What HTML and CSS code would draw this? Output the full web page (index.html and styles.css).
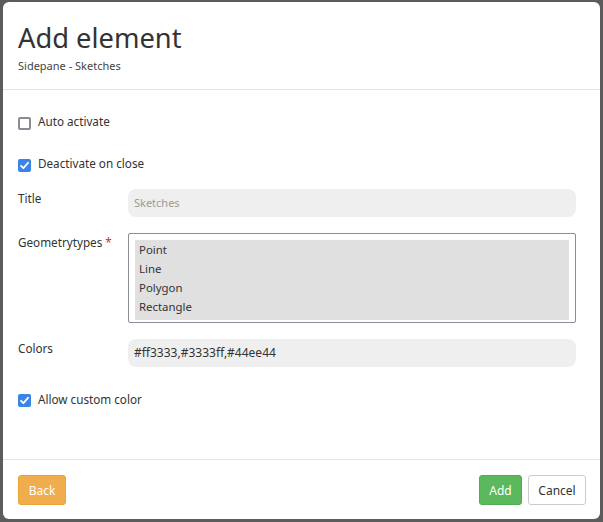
FILE: index.html
```html
<!DOCTYPE html>
<html>
<head>
<meta charset="utf-8">
<link rel="stylesheet" href="styles.css">
</head>
<body>
<div class="modal">
  <div class="modal-header">
    <h1 class="title">Add element</h1>
    <div class="subtitle">Sidepane - Sketches</div>
  </div>
  <div class="modal-body">
    <label class="check-row first">
      <span class="box"></span>
      <span class="check-text">Auto activate</span>
    </label>
    <label class="check-row second">
      <span class="box checked"><svg viewBox="0 0 13 13" width="13" height="13"><path d="M3 6.8 L5.4 9.2 L10 3.8" fill="none" stroke="#fff" stroke-width="1.8" stroke-linecap="round" stroke-linejoin="round"/></svg></span>
      <span class="check-text">Deactivate on close</span>
    </label>
    <div class="field title-field">
      <div class="label">Title</div>
      <div class="input placeholder">Sketches</div>
    </div>
    <div class="field geo-field">
      <div class="label">Geometrytypes <span class="req">*</span></div>
      <div class="select">
        <div class="options">
          <div class="opt">Point</div>
          <div class="opt">Line</div>
          <div class="opt">Polygon</div>
          <div class="opt">Rectangle</div>
        </div>
      </div>
    </div>
    <div class="field colors-field">
      <div class="label">Colors</div>
      <div class="input value">#ff3333,#3333ff,#44ee44</div>
    </div>
    <label class="check-row third">
      <span class="box checked"><svg viewBox="0 0 13 13" width="13" height="13"><path d="M3 6.8 L5.4 9.2 L10 3.8" fill="none" stroke="#fff" stroke-width="1.8" stroke-linecap="round" stroke-linejoin="round"/></svg></span>
      <span class="check-text last">Allow custom color</span>
    </label>
  </div>
  <div class="modal-footer">
    <button class="btn btn-back">Back</button>
    <div class="spacer"></div>
    <button class="btn btn-add">Add</button>
    <button class="btn btn-cancel">Cancel</button>
  </div>
</div>
</body>
</html>
```

FILE: styles.css
```css
html, body {
  margin: 0;
  padding: 0;
  height: 100%;
}
body {
  background: #5c5c5c;
  font-family: "Noto Sans", "Open Sans", sans-serif;
  color: #333;
  font-size: 11.7px;
}
.modal {
  box-sizing: border-box;
  margin: 2px 3px 0 3px;
  width: 597px;
  height: 517px;
  background: #fff;
  border-radius: 6px;
  display: flex;
  flex-direction: column;
}
.modal-header {
  box-sizing: border-box;
  height: 88px;
  padding: 19px 15px 0 15px;
  border-bottom: 1px solid #e5e5e5;
}
.title {
  margin: 0;
  font-weight: 400;
  font-size: 27.3px;
  line-height: 34px;
  color: #333;
}
.subtitle {
  margin-top: 4px;
  font-size: 11px;
  line-height: 14px;
  color: #444;
}
.modal-body {
  flex: 1;
  padding: 0 24px 0 15px;
}
.check-row {
  display: flex;
  align-items: center;
  gap: 7px;
  height: 16px;
}
.check-row.first { margin-top: 25px; }
.check-row.second { margin-top: 26px; }
.check-row.third { margin-top: 25px; }
.check-text {
  line-height: 16px;
  margin-top: -5px;
}
.check-text.last {
  margin-top: -2px;
}
.box {
  box-sizing: border-box;
  width: 13px;
  height: 13px;
  border: 2px solid #8b8b95;
  border-radius: 2px;
  background: #fff;
  display: block;
  position: relative;
}
.box.checked {
  border: none;
  background: #3a84e8;
}
.box svg {
  display: block;
}
.field {
  display: flex;
  align-items: flex-start;
}
.label {
  width: 110px;
  flex: none;
  padding-top: 1px;
  line-height: 16px;
}
.req {
  color: #c0392b;
}
.title-field { margin-top: 16px; }
.geo-field { margin-top: 16px; }
.colors-field { margin-top: 16px; }
.input {
  flex: 1;
  box-sizing: border-box;
  height: 28px;
  background: #efefef;
  border-radius: 8px;
  padding: 0 6px;
  line-height: 28px;
  font-size: 11px;
  color: #333;
}
.input.placeholder {
  color: #999;
}
.input.value {
  font-size: 12px;
}
.select {
  flex: 1;
  box-sizing: border-box;
  height: 90px;
  border: 1px solid #8d8d99;
  border-radius: 2px;
  padding: 6px 6px 2px 6px;
}
.options {
  background: #e0e0e0;
  height: 80px;
  padding-top: 0;
  box-sizing: border-box;
}
.opt {
  height: 19px;
  line-height: 19px;
  padding-left: 4px;
  font-size: 11.4px;
  color: #333;
}
.modal-footer {
  box-sizing: border-box;
  height: 60px;
  border-top: 1px solid #e5e5e5;
  display: flex;
  align-items: flex-start;
  padding: 15px 14px 0 15px;
  gap: 6px;
}
.spacer { flex: 1; }
.btn {
  box-sizing: border-box;
  height: 30px;
  border-radius: 3px;
  font-family: inherit;
  font-size: 12px;
  padding: 0 9px;
  border: 1px solid transparent;
  cursor: pointer;
}
.btn-back {
  width: 48px;
  background: #f0ad4e;
  border-color: #eea236;
  color: #fff;
}
.btn-add {
  width: 43px;
  background: #5cb85c;
  border-color: #4cae4c;
  color: #fff;
}
.btn-cancel {
  width: 58px;
  background: #fff;
  border-color: #ccc;
  color: #333;
}
```
